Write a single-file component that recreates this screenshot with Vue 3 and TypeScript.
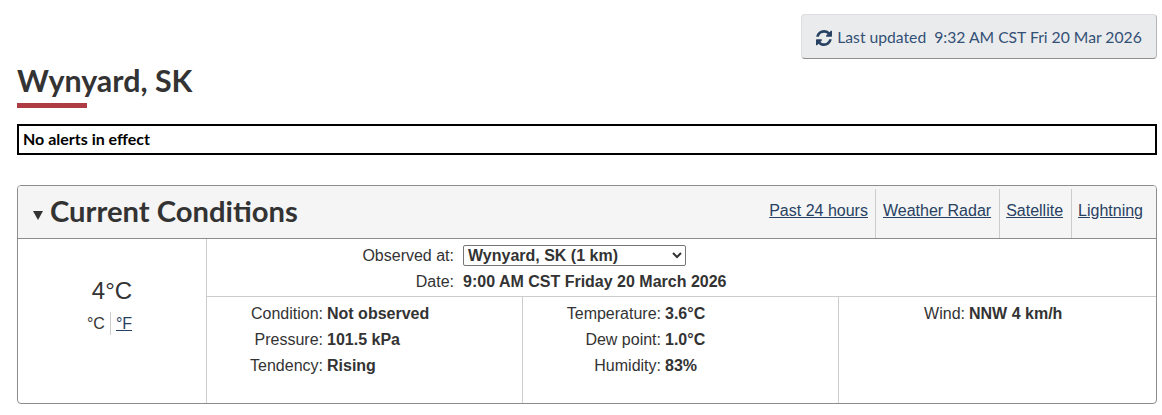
<script setup lang="ts">
const links: string[] = ['Past 24 hours', 'Weather Radar', 'Satellite', 'Lightning']
const cols: { k: string; v: string }[][] = [
  [
    { k: 'Condition:', v: 'Not observed' },
    { k: 'Pressure:', v: '101.5 kPa' },
    { k: 'Tendency:', v: 'Rising' },
  ],
  [
    { k: 'Temperature:', v: '3.6°C' },
    { k: 'Dew point:', v: '1.0°C' },
    { k: 'Humidity:', v: '83%' },
  ],
  [{ k: 'Wind:', v: 'NNW 4 km/h' }],
]
</script>

<template>
  <div class="page">
    <div class="top">
      <button class="refresh" type="button">
        <svg class="ico" viewBox="0 0 1536 1536" width="16" height="16" aria-hidden="true">
          <path fill="#284162" d="M1511 928q0 5-1 7-64 268-268 434.500t-478 166.500q-146 0-282.500-55t-243.500-157l-129 129q-19 19-45 19t-45-19-19-45v-448q0-26 19-45t45-19h448q26 0 45 19t19 45-19 45l-137 137q71 66 161 102t187 36q134 0 250-65t186-179q11-17 53-117 8-23 30-23h192q13 0 22.500 9.500t9.500 22.500zm25-800v448q0 26-19 45t-45 19h-448q-26 0-45-19t-19-45 19-45l138-138q-148-137-349-137-134 0-250 65t-186 179q-11 17-53 117-8 23-30 23h-199q-13 0-22.500-9.500t-9.500-22.500v-7q65-268 270-434.500t480-166.500q146 0 284 55.500t245 156.500l130-129q19-19 45-19t45 19 19 45z" />
        </svg>
        <span>Last updated&nbsp; 9:32 AM CST Fri 20 Mar 2026</span>
      </button>
    </div>
    <h1 class="title">Wynyard, SK</h1>
    <div class="alert">No alerts in effect</div>
    <section class="panel">
      <header class="head">
        <h2 class="h2"><span class="tri"></span>Current Conditions</h2>
        <nav class="links">
          <a v-for="l in links" :key="l" href="#" class="lnk">{{ l }}</a>
        </nav>
      </header>
      <div class="body">
        <div class="temp">
          <div class="big">4°C</div>
          <div class="units"><span class="c">°C</span><a href="#" class="f">°F</a></div>
        </div>
        <div class="main">
          <div class="obs">
            <div class="obsrow">
              <span class="obsk">Observed at:</span>
              <select class="sel"><option>Wynyard, SK (1 km)</option></select>
            </div>
            <div class="obsrow">
              <span class="obsk">Date:</span>
              <strong>9:00 AM CST Friday 20 March 2026</strong>
            </div>
          </div>
          <div class="cols">
            <div v-for="(col, i) in cols" :key="i" class="col">
              <div v-for="r in col" :key="r.k" class="row">
                <span class="k">{{ r.k }}</span><strong class="v">{{ r.v }}</strong>
              </div>
            </div>
          </div>
        </div>
      </div>
    </section>
  </div>
</template>

<style scoped>
.page {
  box-sizing: border-box;
  width: 1162px;
  height: 415px;
  padding: 14px 5px 0 17px;
  font-family: "Liberation Sans", Arial, sans-serif;
  font-size: 16px;
  color: #333;
  background: #fff;
  overflow: hidden;
}
.top {
  display: flex;
  justify-content: flex-end;
  height: 45px;
}
.refresh {
  display: flex;
  align-items: center;
  justify-content: center;
  gap: 5px;
  box-sizing: border-box;
  width: 356px;
  height: 45px;
  margin: 0;
  padding: 0;
  background: #eaebed;
  border: 1px solid #dcdee1;
  border-bottom-color: #8f8f8f;
  border-right-color: #b5b5b5;
  border-radius: 4px;
  font-family: Lato, sans-serif;
  font-size: 15.7px;
  color: #335075;
}
.ico { flex: none; margin-top: 2px; }
.title {
  width: max-content;
  margin: 0;
  padding-top: 2px;
  height: 42px;
  line-height: 38px;
  font-family: Lato, sans-serif;
  font-size: 30.4px;
  font-weight: 700;
  color: #333;
  position: relative;
}
.title::after {
  content: "";
  position: absolute;
  left: 0;
  top: 44px;
  width: 70px;
  height: 5px;
  background: #af3c43;
}
.alert {
  box-sizing: border-box;
  height: 31px;
  margin-top: 21px;
  padding-left: 4px;
  border: 2px solid #000;
  font-family: Lato, sans-serif;
  font-size: 16px;
  font-weight: 700;
  line-height: 26px;
  color: #000;
}
.panel {
  box-sizing: border-box;
  height: 219px;
  margin-top: 30px;
  border: 1px solid #8c8c8c;
  border-radius: 4px;
  overflow: hidden;
}
.head {
  display: flex;
  align-items: stretch;
  justify-content: space-between;
  height: 53px;
  box-sizing: border-box;
  background: #f5f5f5;
  border-bottom: 1px solid #8c8c8c;
}
.h2 {
  display: flex;
  align-items: center;
  margin: 0;
  padding-left: 15px;
  padding-bottom: 3px;
  font-family: Lato, sans-serif;
  font-size: 29.2px;
  font-weight: 700;
  color: #333;
}
.tri {
  width: 0;
  height: 0;
  margin: 10px 7px 0 0;
  border-left: 5px solid transparent;
  border-right: 5px solid transparent;
  border-top: 9px solid #333;
}
.links {
  display: flex;
  align-items: stretch;
  padding: 3px 0 0;
}
.lnk {
  display: flex;
  align-items: flex-start;
  padding: 12px 8px 0 6px;
  color: #284162;
  border-left: 1px solid #ccc;
  line-height: 20px;
}
.lnk:first-child { border-left: none; padding-right: 7px; }
.lnk:nth-child(2) { padding-left: 7px; }
.lnk:last-child { padding-right: 13px; }
.body {
  display: flex;
  height: 164px;
}
.temp {
  box-sizing: border-box;
  width: 189px;
  flex: none;
  border-right: 1px solid #ccc;
  text-align: center;
  padding-top: 37px;
}
.big {
  font-size: 24px;
  line-height: 30px;
}
.units {
  display: flex;
  justify-content: center;
  padding-right: 5px;
  margin-top: 6px;
  line-height: 23px;
}
.c { padding-right: 5px; border-right: 1px solid #ccc; }
.f { padding-left: 5px; color: #284162; }
.main {
  flex: 1;
  display: flex;
  flex-direction: column;
}
.obs {
  box-sizing: border-box;
  height: 58px;
  padding-top: 4px;
  border-bottom: 1px solid #ccc;
}
.obsrow {
  display: flex;
  align-items: center;
  height: 26px;
}
.obsk {
  box-sizing: border-box;
  width: 247px;
  text-align: right;
  margin-right: 9px;
}
.sel {
  box-sizing: border-box;
  align-self: flex-start;
  width: 223px;
  height: 21px;
  margin-top: 2px;
  padding: 0;
  font-family: "Liberation Sans", Arial, sans-serif;
  font-size: 16px;
  font-weight: 700;
  color: #333;
  background: #fff;
  border: 1px solid #767676;
  border-radius: 2px;
}
.cols {
  flex: 1;
  display: grid;
  grid-template-columns: 316px 316px 1fr;
}
.col {
  padding-top: 4px;
  border-right: 1px solid #ccc;
}
.col:last-child { border-right: none; }
.row {
  display: flex;
  height: 26px;
  line-height: 26px;
  white-space: pre;
}
.k {
  box-sizing: border-box;
  width: 116px;
  text-align: right;
}
.v { margin-left: 4px; }
.col:nth-child(2) .k { width: 138px; }
.col:nth-child(3) .k { width: 126px; }
</style>
